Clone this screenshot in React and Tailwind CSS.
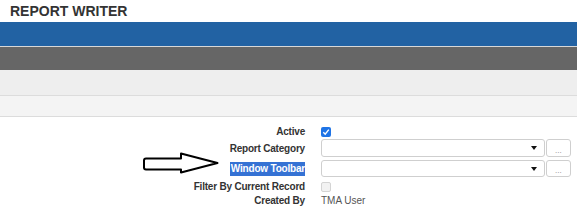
import React from "react";

const font = { fontFamily: '"Liberation Sans", Arial, sans-serif' };

function Label({ children, highlight }) {
  return (
    <div className="w-[305px] shrink-0 text-right text-[10px] tracking-[-0.2px] font-bold text-[#333333] leading-[13px]">
      {highlight ? (
        <span className="inline-block bg-[#3572d4] text-white leading-[14px] pl-[1px]">{children}</span>
      ) : (
        children
      )}
    </div>
  );
}

function SelectField() {
  return (
    <div className="flex h-full gap-[1px]">
      <div className="relative w-[224px] h-full rounded-[3px] border border-[#cfcfcf] bg-white">
        <div className="absolute right-[7px] top-1/2 -translate-y-1/2 w-0 h-0 border-l-[3px] border-r-[3px] border-t-[4px] border-l-transparent border-r-transparent border-t-[#111]" />
      </div>
      <div className="relative w-[25px] h-full rounded-[3px] border border-[#cfcfcf] bg-white">
        <span className="absolute left-[8px] bottom-[1px] text-[8px] leading-[8px] text-[#888]">...</span>
      </div>
    </div>
  );
}

export default function App() {
  return (
    <div className="relative w-[577px] h-[221px] bg-white overflow-hidden" style={font}>
      <div className="h-[22px] pl-[10px] pt-[2px] text-[14px] font-bold leading-[18px] text-[#333333]">
        REPORT WRITER
      </div>
      <div className="h-[24px] bg-[#2262a3]" />
      <div className="h-[1px] bg-[#d8d8d8]" />
      <div className="h-[23px] bg-[#666666]" />
      <div className="h-[26px] bg-[#eeeeee] border-b border-[#dcdcdc]" />
      <div className="h-[21px] bg-[#f4f4f4] border-b border-[#dcdcdc]" />

      <div className="flex flex-col pt-[8px]">
        <div className="flex items-center h-[13px] gap-[16px]">
          <Label>Active</Label>
          <div className="w-[10px] h-[10px] rounded-[2px] bg-[#1f74e6] flex items-center justify-center">
            <svg width="8" height="8" viewBox="0 0 8 8">
              <path d="M1.3 4.3 L3.2 6.2 L6.8 1.6" fill="none" stroke="white" strokeWidth="1.4" />
            </svg>
          </div>
        </div>
        <div className="flex items-center h-[18px] mt-[1px] gap-[16px]">
          <Label>Report Category</Label>
          <SelectField />
        </div>
        <div className="flex items-center h-[17px] mt-[3px] gap-[16px]">
          <Label highlight>Window Toolbar</Label>
          <SelectField />
        </div>
        <div className="flex items-center h-[13px] mt-[3px] gap-[16px]">
          <Label>Filter By Current Record</Label>
          <div className="w-[10px] h-[10px] rounded-[2px] bg-[#f2f2f2] border border-[#d4d4d4]" />
        </div>
        <div className="flex items-center h-[13px] mt-[1px] gap-[16px]">
          <Label>Created By</Label>
          <div className="text-[10px] leading-[13px] text-[#555555]">TMA User</div>
        </div>
      </div>

      <svg className="absolute left-0 top-0" width="577" height="221" viewBox="0 0 577 221">
        <path
          d="M146 158.5 L181 158.5 L181 153.5 L217.5 163 L181 172.5 L181 169.5 L146 169.5 Q144 169.5 144 167.5 L144 160.5 Q144 158.5 146 158.5 Z"
          fill="white"
          stroke="black"
          strokeWidth="2"
          strokeLinejoin="round"
        />
      </svg>
    </div>
  );
}
